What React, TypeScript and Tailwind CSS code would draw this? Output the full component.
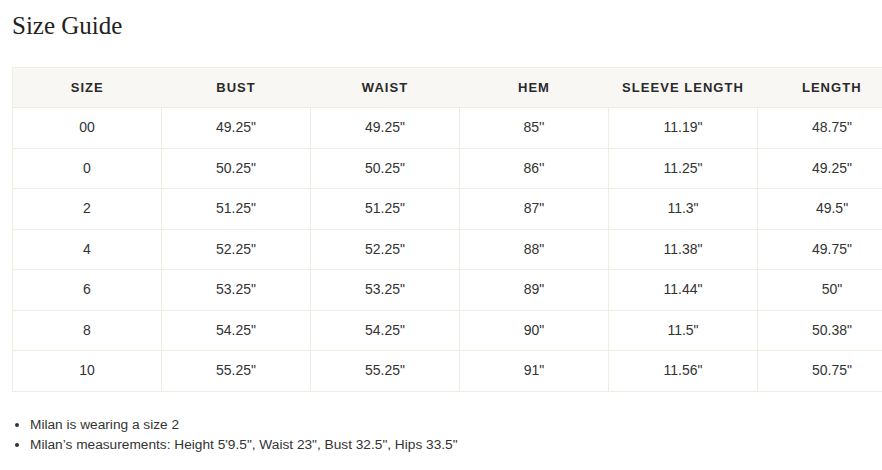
const headers = ["SIZE", "BUST", "WAIST", "HEM", "SLEEVE LENGTH", "LENGTH"];

const rows = [
  ["00", "49.25\"", "49.25\"", "85''", "11.19\"", "48.75\""],
  ["0", "50.25\"", "50.25\"", "86''", "11.25\"", "49.25\""],
  ["2", "51.25\"", "51.25\"", "87\"", "11.3\"", "49.5\""],
  ["4", "52.25\"", "52.25\"", "88\"", "11.38\"", "49.75\""],
  ["6", "53.25\"", "53.25\"", "89\"", "11.44\"", "50\""],
  ["8", "54.25\"", "54.25\"", "90\"", "11.5\"", "50.38\""],
  ["10", "55.25\"", "55.25\"", "91\"", "11.56\"", "50.75\""],
];

export default function App() {
  return (
    <div className="w-[882px] h-[470px] overflow-hidden bg-white text-[#222] font-['Liberation_Sans',Arial,sans-serif]">
      <h1 className="pl-3 pt-[11px] text-[25px] leading-[30px] font-['Liberation_Serif',serif] text-[#222]">
        Size Guide
      </h1>
      <div className="pl-3 mt-[26px]">
        <table className="w-[894px] table-fixed border-collapse border border-[#efece2]">
          <thead>
            <tr className="bg-[#f9f7f3] h-[40px]">
              {headers.map((h) => (
                <th key={h} className="w-[149px] text-center text-[13px] font-semibold tracking-[0.08em] text-[#2a2a2a]">
                  {h}
                </th>
              ))}
            </tr>
          </thead>
          <tbody>
            {rows.map((r, i) => (
              <tr key={i} className="h-[40.5px]">
                {r.map((c, j) => (
                  <td key={j} className="border border-[#efece2] text-center text-[14px] text-[#333]">
                    {c}
                  </td>
                ))}
              </tr>
            ))}
          </tbody>
        </table>
      </div>
      <ul className="list-disc pl-[30px] mt-[23px] text-[13.7px] leading-[20px] text-[#333]">
        <li>Milan is wearing a size 2</li>
        <li>Milan’s measurements: Height 5'9.5", Waist 23", Bust 32.5", Hips 33.5"</li>
      </ul>
    </div>
  );
}
